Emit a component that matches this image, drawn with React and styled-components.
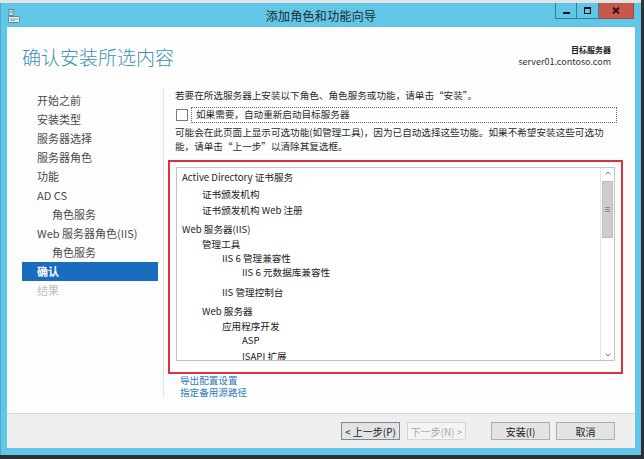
import React from 'react'
import styled, { createGlobalStyle } from 'styled-components'

const GlobalStyle = createGlobalStyle`
  html, body {
    margin: 0;
    padding: 0;
    background: #2c3135;
  }
  body {
    font-family: "Noto Sans CJK SC", "Noto Sans", sans-serif;
  }
`

const Screen = styled.div`
  width: 644px;
  height: 459px;
  overflow: hidden;
  display: flex;
  flex-direction: column;
  background: #2c3135;
`
const BackStrip = styled.div`
  height: 3px;
  flex-shrink: 0;
  background: #dfe3e6;
  border-right: 3px solid #2c3135;
`
const Window = styled.div`
  width: 641px;
  height: 452px;
  flex-shrink: 0;
  display: flex;
  flex-direction: column;
  background: #62c6e6;
  border-left: 1px solid #4aa9c8;
  box-sizing: border-box;
  padding: 0 6px 7px 6px;
`
const TitleBar = styled.div`
  height: 24px;
  flex-shrink: 0;
  display: grid;
  grid-template-columns: 1fr auto 1fr;
  align-items: center;
  margin: 0 -6px;
  padding: 0 7px 0 7px;
`
const AppIcon = styled.svg`
  width: 12px;
  height: 14px;
  margin-top: 2px;
`
const Title = styled.div`
  font-size: 12px;
  color: #1c2a30;
  letter-spacing: 0.3px;
`
const WinButtons = styled.div`
  justify-self: end;
  align-self: start;
  display: flex;
`
const WinButton = styled.div`
  width: ${p => (p.$close ? '35px' : '22px')};
  height: 16px;
  box-sizing: border-box;
  display: flex;
  align-items: center;
  justify-content: center;
  background: ${p => (p.$close ? '#c9584c' : '#62c6e6')};
  border: 1px solid ${p => (p.$close ? '#a94438' : '#3a7d93')};
  border-top: none;
  border-left-width: ${p => (p.$first ? '1px' : '0')};
`
const MinGlyph = styled.span`
  width: 7px;
  height: 2px;
  background: #111;
  margin-top: 5px;
`
const MaxGlyph = styled.span`
  width: 5px;
  height: 4px;
  border: 1px solid #111;
  border-top-width: 2px;
`
const CloseGlyph = styled.svg`
  width: 8px;
  height: 7px;
`

const Client = styled.div`
  flex: 1;
  min-height: 0;
  background: #fdfdfd;
  display: flex;
  flex-direction: column;
`
const Header = styled.div`
  height: 61px;
  flex-shrink: 0;
  display: flex;
  justify-content: space-between;
  align-items: flex-start;
  padding: 0 24px 0 15px;
`
const PageTitle = styled.div`
  margin-top: 17px;
  font-size: 19px;
  line-height: 26px;
  color: #3a91b8;
  font-weight: 300;
`
const Target = styled.div`
  margin-top: 17px;
  text-align: right;
  font-size: 8px;
  line-height: 12px;
  color: #333;
`
const TargetLabel = styled.div`
  font-weight: 700;
  color: #222;
`
const TargetName = styled.div`
  font-size: 9px;
`

const Body = styled.div`
  flex: 1;
  min-height: 0;
  display: flex;
  padding-bottom: 15px;
  overflow: hidden;
`
const Nav = styled.div`
  width: 136px;
  flex-shrink: 0;
  padding: 3px 5px 0 15px;
  border-right: 1px solid #e2e2e2;
`
const NavItem = styled.div`
  height: 19px;
  line-height: 19px;
  padding-left: ${p => (p.$sub ? '30px' : '15px')};
  font-size: 11px;
  color: ${p => (p.$active ? '#fff' : p.$disabled ? '#bdbdbd' : '#4a4a4a')};
  background: ${p => (p.$active ? '#1a6dbd' : 'transparent')};
  font-weight: ${p => (p.$active ? 700 : 400)};
  white-space: nowrap;
`

const Content = styled.div`
  flex: 1;
  min-width: 0;
  padding: 0 12px 0 11px;
  font-size: 9.6px;
  color: #2a2a2a;
`
const Intro = styled.div`
  line-height: 14px;
  white-space: nowrap;
`
const CheckRow = styled.div`
  margin-top: 5px;
  margin-right: 6px;
  display: flex;
  align-items: center;
  gap: 3px;
  height: 16px;
`
const CheckBox = styled.span`
  width: 10px;
  height: 10px;
  margin-left: 1px;
  border: 1px solid #7a7a7a;
  background: #fff;
  flex-shrink: 0;
`
const CheckLabel = styled.span`
  flex: 1;
  height: 14px;
  line-height: 13px;
  padding-left: 4px;
  border: 1px dotted #6a6a6a;
`
const Note = styled.div`
  margin-top: 2px;
  line-height: 14px;
  white-space: nowrap;
`
const Highlight = styled.div`
  margin: 7px 0 0 -7px;
  height: 214px;
  box-sizing: border-box;
  border: 2px solid #d7343f;
  padding: 5px 6px 11px 6px;
`
const ListBox = styled.div`
  height: 100%;
  box-sizing: border-box;
  border: 1px solid #c4c4c4;
  background: #fff;
  display: flex;
  overflow: hidden;
`
const ListBody = styled.div`
  flex: 1;
  padding: 2px 0 0 5px;
  overflow: hidden;
`
const ListItem = styled.div`
  line-height: 14px;
  white-space: nowrap;
  color: #222;
  padding-left: ${p => p.$level * 20}px;
`
const ScrollBar = styled.div`
  width: 13px;
  display: flex;
  flex-direction: column;
  align-items: center;
  border-left: 1px solid #e6e6e6;
  background: #fff;
`
const Arrow = styled.svg`
  width: 12px;
  height: 11px;
`
const Thumb = styled.div`
  margin-top: 2px;
  width: 11px;
  height: 57px;
  box-sizing: border-box;
  background: #cdcdcd;
  border: 1px solid #bcbcbd;
  display: flex;
  flex-direction: column;
  align-items: center;
  justify-content: center;
  gap: 1px;
`
const Grip = styled.span`
  width: 5px;
  height: 1px;
  background: #8a8a8a;
`
const Spacer = styled.div`
  flex: 1;
`
const Links = styled.div`
  margin-left: 5px;
  line-height: 12px;
`
const Link = styled.div`
  color: #2f7cba;
`

const Footer = styled.div`
  height: 35px;
  flex-shrink: 0;
  box-sizing: border-box;
  border-top: 1px solid #dadada;
  background: #efefef;
  display: flex;
  align-items: center;
  justify-content: flex-end;
  padding-right: 20px;
`
const Button = styled.div`
  width: 59px;
  height: 18px;
  box-sizing: border-box;
  margin-left: ${p => p.$gap}px;
  display: flex;
  align-items: center;
  justify-content: center;
  font-size: 10px;
  color: ${p => (p.$disabled ? '#a8a8a8' : '#222')};
  background: ${p => (p.$disabled ? '#f4f4f4' : '#e3e3e3')};
  border: 1px solid ${p => (p.$disabled ? '#d6d6d6' : p.$focus ? '#7c8a96' : '#adadad')};
`

const navItems = [
  { label: '开始之前' },
  { label: '安装类型' },
  { label: '服务器选择' },
  { label: '服务器角色' },
  { label: '功能' },
  { label: 'AD CS' },
  { label: '角色服务', sub: true },
  { label: 'Web 服务器角色(IIS)' },
  { label: '角色服务', sub: true },
  { label: '确认', active: true },
  { label: '结果', disabled: true },
]

const listItems = [
  { text: 'Active Directory 证书服务', level: 0, mt: 0 },
  { text: '证书颁发机构', level: 1, mt: 3 },
  { text: '证书颁发机构 Web 注册', level: 1, mt: 2 },
  { text: 'Web 服务器(IIS)', level: 0, mt: 5 },
  { text: '管理工具', level: 1, mt: 1 },
  { text: 'IIS 6 管理兼容性', level: 2, mt: 0 },
  { text: 'IIS 6 元数据库兼容性', level: 3, mt: 0 },
  { text: 'IIS 管理控制台', level: 2, mt: 6 },
  { text: 'Web 服务器', level: 1, mt: 5 },
  { text: '应用程序开发', level: 2, mt: 1 },
  { text: 'ASP', level: 3, mt: 0 },
  { text: 'ISAPI 扩展', level: 3, mt: 2 },
]

const App = () => {
  return (
    <Screen>
      <GlobalStyle />
      <BackStrip />
      <Window>
        <TitleBar>
          <AppIcon viewBox="0 0 12 14">
            <rect x="1" y="0.5" width="4" height="6" fill="#f4f8fa" stroke="#4b6f80" strokeWidth="0.8" />
            <rect x="2" y="2" width="2" height="0.8" fill="#2c7cc0" />
            <rect x="2" y="3.6" width="2" height="0.8" fill="#2c7cc0" />
            <rect x="0.5" y="7.5" width="11" height="6" rx="1" fill="#eef3f6" stroke="#4b6f80" strokeWidth="0.8" />
            <rect x="2" y="9.5" width="8" height="1" fill="#6f9ab0" />
            <rect x="2" y="11.3" width="5" height="0.8" fill="#6f9ab0" />
          </AppIcon>
          <Title>添加角色和功能向导</Title>
          <WinButtons>
            <WinButton $first><MinGlyph /></WinButton>
            <WinButton><MaxGlyph /></WinButton>
            <WinButton $close>
              <CloseGlyph viewBox="0 0 8 7">
                <path d="M1 0.5 L7 6.5 M7 0.5 L1 6.5" stroke="#2a0b06" strokeWidth="1.8" />
              </CloseGlyph>
            </WinButton>
          </WinButtons>
        </TitleBar>
        <Client>
          <Header>
            <PageTitle>确认安装所选内容</PageTitle>
            <Target>
              <TargetLabel>目标服务器</TargetLabel>
              <TargetName>server01.contoso.com</TargetName>
            </Target>
          </Header>
          <Body>
            <Nav>
              {navItems.map((item, i) => (
                <NavItem key={i} $sub={item.sub} $active={item.active} $disabled={item.disabled}>
                  {item.label}
                </NavItem>
              ))}
            </Nav>
            <Content>
              <Intro>若要在所选服务器上安装以下角色、角色服务或功能，请单击“安装”。</Intro>
              <CheckRow>
                <CheckBox />
                <CheckLabel>如果需要，自动重新启动目标服务器</CheckLabel>
              </CheckRow>
              <Note>
                可能会在此页面上显示可选功能(如管理工具)，因为已自动选择这些功能。如果不希望安装这些可选功
                <br />
                能，请单击“上一步”以清除其复选框。
              </Note>
              <Highlight>
                <ListBox>
                  <ListBody>
                    {listItems.map((item, i) => (
                      <ListItem key={i} $level={item.level} style={{ marginTop: item.mt }}>
                        {item.text}
                      </ListItem>
                    ))}
                  </ListBody>
                  <ScrollBar>
                    <Arrow viewBox="0 0 12 11">
                      <path d="M3.5 6.5 L6 4 L8.5 6.5" fill="none" stroke="#707070" strokeWidth="1" />
                    </Arrow>
                    <Thumb>
                      <Grip />
                      <Grip />
                      <Grip />
                    </Thumb>
                    <Spacer />
                    <Arrow viewBox="0 0 12 11">
                      <path d="M3.5 4.5 L6 7 L8.5 4.5" fill="none" stroke="#707070" strokeWidth="1" />
                    </Arrow>
                  </ScrollBar>
                </ListBox>
              </Highlight>
              <Links>
                <Link>导出配置设置</Link>
                <Link>指定备用源路径</Link>
              </Links>
            </Content>
          </Body>
          <Footer>
            <Button $focus>&lt; 上一步(P)</Button>
            <Button $gap={7} $disabled>下一步(N) &gt;</Button>
            <Button $gap={25}>安装(I)</Button>
            <Button $gap={6}>取消</Button>
          </Footer>
        </Client>
      </Window>
    </Screen>
  )
}

export default App
